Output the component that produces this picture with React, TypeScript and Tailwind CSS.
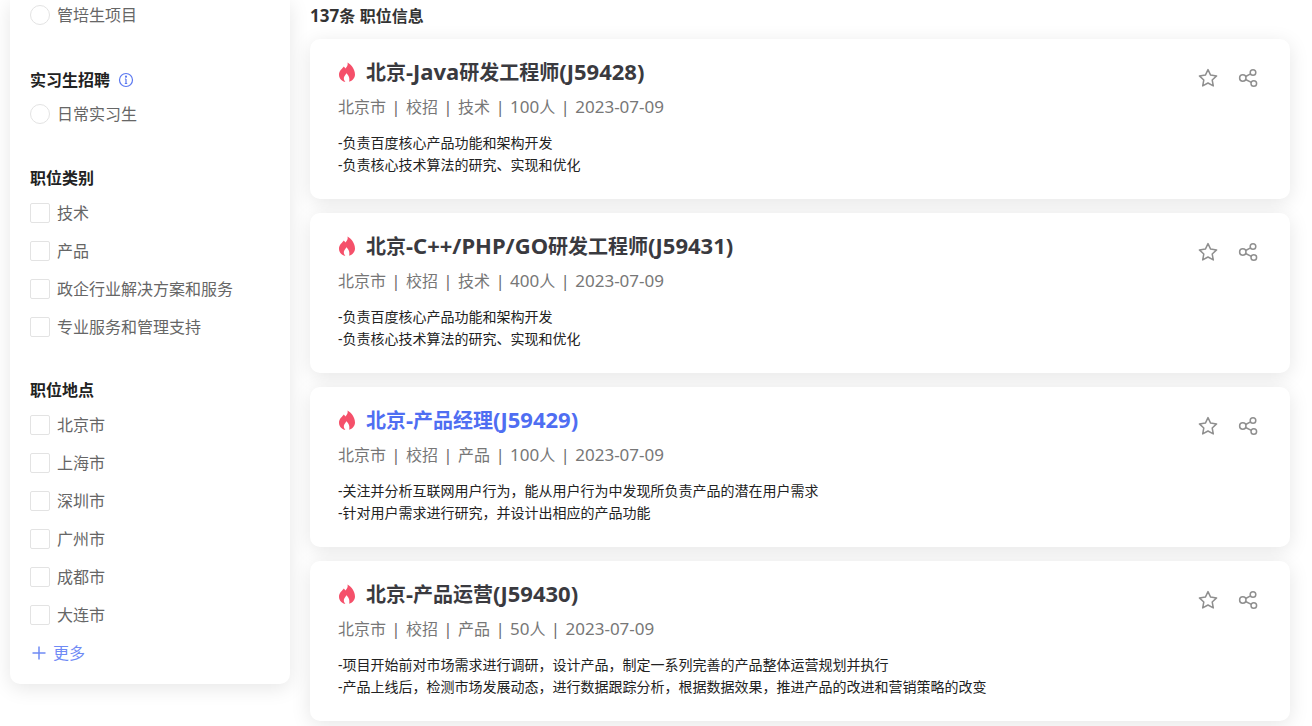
import React from 'react';

const jobs = [
  { title: '北京-Java研发工程师(J59428)', meta: ['北京市', '校招', '技术', '100人', '2023-07-09'], desc: ['-负责百度核心产品功能和架构开发', '-负责核心技术算法的研究、实现和优化'] },
  { title: '北京-C++/PHP/GO研发工程师(J59431)', meta: ['北京市', '校招', '技术', '400人', '2023-07-09'], desc: ['-负责百度核心产品功能和架构开发', '-负责核心技术算法的研究、实现和优化'] },
  { title: '北京-产品经理(J59429)', active: true, meta: ['北京市', '校招', '产品', '100人', '2023-07-09'], desc: ['-关注并分析互联网用户行为，能从用户行为中发现所负责产品的潜在用户需求', '-针对用户需求进行研究，并设计出相应的产品功能'] },
  { title: '北京-产品运营(J59430)', meta: ['北京市', '校招', '产品', '50人', '2023-07-09'], desc: ['-项目开始前对市场需求进行调研，设计产品，制定一系列完善的产品整体运营规划并执行', '-产品上线后，检测市场发展动态，进行数据跟踪分析，根据数据效果，推进产品的改进和营销策略的改变'] },
];

// latin runs sit a bit larger than the CJK around them
const Mixed: React.FC<{ text: string; latin: string }> = ({ text, latin }) => (
  <>
    {text.split(/([\x20-\x7e]+)/).map((part, i) =>
      i % 2 === 1 ? (
        <span key={i} className={latin}>{part}</span>
      ) : (
        part
      ),
    )}
  </>
);

const Option: React.FC<{ label: string; round?: boolean }> = ({ label, round }) => (
  <div className="flex items-center h-[20px] mb-[18px] last:mb-0">
    <span className={`w-[20px] h-[20px] border border-[#e3e3e3] bg-white ${round ? 'rounded-full' : 'rounded-[2px]'}`}></span>
    <span className="ml-[7px] text-[16px] leading-[20px] text-[#666666]">{label}</span>
  </div>
);

const Flame = () => (
  <svg width="18" height="20" viewBox="0 0 18 20" className="shrink-0">
    <path fill="#f5506a" d="M9.6 0.6c.5 2.9-.8 4.3-2.2 5.900-.5-.9-.9-1.500-1.600-2.100C4.600 6.300 1 8.600 1 12.700 1 16.800 4.300 19.600 7.400 19.800 5.700 18.300 5.400 16.200 6.300 14.500c.6-1.100 1.400-1.800 2-3.200 1.500 1.100 3.800 3.800 2.900 8.400 3.300-.9 5.800-3.600 5.800-7.200C17 7.500 13.200 2.700 9.600.6z" />
  </svg>
);

const Star = () => (
  <svg width="20" height="20" viewBox="0 0 20 20" fill="none" stroke="#8f8f8f" strokeWidth="1.5" strokeLinejoin="round">
    <path d="M10 1.600l2.600 5.500 6 .8-4.400 4.100 1.100 5.900L10 15l-5.300 2.900 1.100-5.900L1.400 7.900l6-.8z" />
  </svg>
);

const Share = () => (
  <svg width="20" height="20" viewBox="0 0 20 20" fill="none" stroke="#8f8f8f" strokeWidth="1.5">
    <circle cx="4.800" cy="10" r="3.200" />
    <circle cx="15" cy="4.500" r="2.800" />
    <circle cx="15.800" cy="15.500" r="2.800" />
    <path d="M7.600 8.500l5-2.600M7.600 11.500l5.700 2.800" />
  </svg>
);

const JobCard: React.FC<{ job: (typeof jobs)[number] }> = ({ job }) => (
  <div className="relative h-[160px] shrink-0 rounded-[10px] bg-white pl-[28px] pt-[17px] shadow-[0_4px_20px_rgba(0,0,0,0.1)]">
    <div className="flex items-center h-[32px]">
      <Flame />
      <h3 className={`ml-[10px] text-[20px] leading-[32px] font-bold ${job.active ? 'text-[#4f6ef2]' : 'text-[#3a3a3f]'}`}>
        <Mixed text={job.title} latin="text-[22px]" />
      </h3>
    </div>
    <div className="mt-[7px] flex items-center text-[16px] leading-[24px] text-[#777777]">
      {job.meta.map((m, i) => (
        <React.Fragment key={i}>
          {i > 0 && <span className="w-[20px] text-center text-[#666666]">|</span>}
          <span><Mixed text={m} latin="text-[17px]" /></span>
        </React.Fragment>
      ))}
    </div>
    <div className="mt-[13px] text-[14px] leading-[22px] text-[#222222]">
      {job.desc.map((d) => (
        <p key={d}>{d}</p>
      ))}
    </div>
    <div className="absolute right-[32px] top-[29px] flex gap-[20px]">
      <Star />
      <Share />
    </div>
  </div>
);

const App: React.FC = () => {
  return (
    <div className="flex h-screen overflow-hidden bg-white font-['Noto_Sans','Noto_Sans_CJK_SC',sans-serif]">
      <aside className="ml-[10px] h-[684px] w-[280px] shrink-0 rounded-b-[10px] bg-white pl-[20px] pt-[5px] shadow-[0_4px_20px_rgba(0,0,0,0.1)]">
        <Option label="管培生项目" round />
        <div className="mt-[43px] flex items-center h-[24px] text-[16px] font-bold text-[#222222]">
          <span>实习生招聘</span>
          <svg width="16" height="16" viewBox="0 0 16 16" fill="none" className="ml-[8px]" stroke="#5b78f0" strokeWidth="1.2">
            <circle cx="8" cy="8" r="6.500" />
            <path d="M8 7v4.500M6.800 11.500h2.400M6.900 7h1.100" />
            <circle cx="8" cy="4.700" r="0.500" fill="#5b78f0" />
          </svg>
        </div>
        <div className="mt-[12px]"><Option label="日常实习生" round /></div>
        <div className="mt-[42px] h-[24px] text-[16px] leading-[24px] font-bold text-[#222222]">职位类别</div>
        <div className="mt-[13px]">
          {['技术', '产品', '政企行业解决方案和服务', '专业服务和管理支持'].map((l) => (
            <Option key={l} label={l} />
          ))}
        </div>
        <div className="mt-[41px] h-[24px] text-[16px] leading-[24px] font-bold text-[#222222]">职位地点</div>
        <div className="mt-[13px]">
          {['北京市', '上海市', '深圳市', '广州市', '成都市', '大连市'].map((l) => (
            <Option key={l} label={l} />
          ))}
        </div>
        <div className="mt-[18px] flex items-center text-[16px] leading-[20px] text-[#6f8af5]">
          <svg width="16" height="16" viewBox="0 0 16 16" className="ml-[1px]" stroke="#6f8af5" strokeWidth="1.500">
            <path d="M8 1.500v13M1.500 8h13" />
          </svg>
          <span className="ml-[6px]">更多</span>
        </div>
      </aside>
      <main className="ml-[20px] w-[980px] shrink-0">
        <div className="mb-[11px] mt-[4px] text-[16px] leading-[24px] font-bold text-[#333333]">
          <Mixed text="137条 职位信息" latin="text-[17px]" />
        </div>
        <div className="flex flex-col gap-[14px]">
          {jobs.map((job) => (
            <JobCard key={job.title} job={job} />
          ))}
        </div>
      </main>
    </div>
  );
};

export default App;
